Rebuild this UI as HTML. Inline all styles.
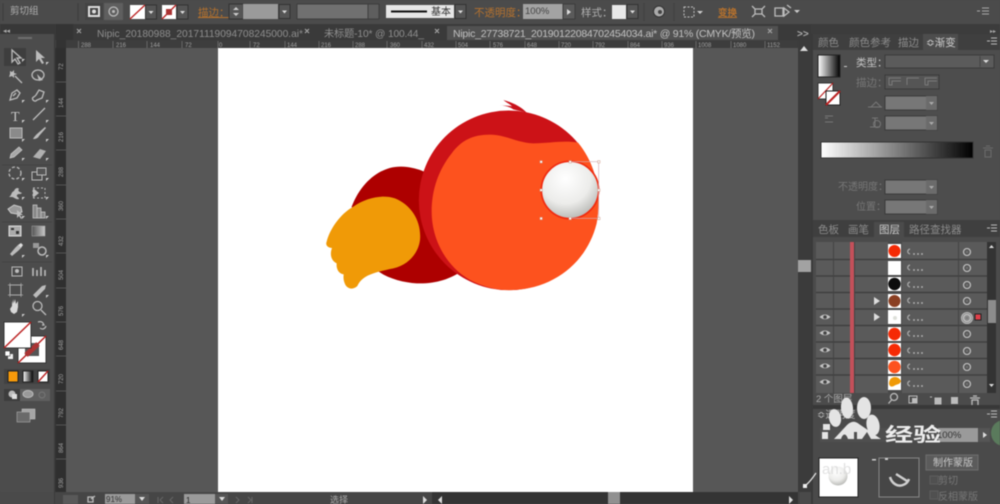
<!DOCTYPE html>
<html><head><meta charset="utf-8"><title>Illustrator</title>
<style>
html,body{margin:0;padding:0;background:#4a4a4a;width:1000px;height:504px;overflow:hidden}
svg{display:block;filter:blur(.5px)}
text{font-family:"Liberation Sans","Noto Sans CJK SC",sans-serif}
.c{font-size:11px;fill:#b0b0b0}
.o{font-size:11px;fill:#b5722e;text-decoration:underline}
.t{font-size:10.2px;fill:#8e8e8e}
.r{font-size:6px;fill:#a0a0a0}
.p{font-size:10.5px;fill:#8c8c8c}
.i{fill:none;stroke:#bcbcbc;stroke-width:1.3}
.f{fill:#bcbcbc}
</style></head><body>
<svg width="1000" height="504" viewBox="0 0 1000 504" xmlns="http://www.w3.org/2000/svg">
<defs>
<g id="dd"><rect x="0" y="0" width="11" height="14" fill="#555" stroke="#333"/><path d="M3 6h5l-2.500 3z" fill="#ddd"/></g>
<g id="tgt"><circle cx="0" cy="0" r="3.500" fill="none" stroke="#c8c8c8" stroke-width="1.100"/><circle cx="0" cy="0" r="1" fill="#777"/></g>
<g id="eye"><path d="M-5.500 0Q0 -5 5.500 0Q0 4.500 -5.500 0Z" fill="#c4c4c4"/><circle r="1.800" fill="#444"/></g>
<g id="crn"><path d="M0 0l3 0-3 3z" fill="#ccc"/></g>
<radialGradient id="eg" cx=".42" cy=".3" r=".8"><stop offset="0" stop-color="#fff"/><stop offset=".55" stop-color="#ececea"/><stop offset="1" stop-color="#a9aaa6"/></radialGradient>
<linearGradient id="gb"><stop offset="0" stop-color="#fff"/><stop offset="1" stop-color="#000"/></linearGradient>
<linearGradient id="tg"><stop offset="0" stop-color="#555"/><stop offset="1" stop-color="#c8c8c8"/></linearGradient>
</defs>

<!-- base -->
<rect width="1000" height="504" fill="#4a4a4a"/>
<rect x="66" y="48" width="732" height="444" fill="#575757"/>
<rect x="218" y="48" width="475" height="444" fill="#fff"/>

<!-- control bar -->
<rect width="1000" height="24" fill="#4b4b4b"/>
<path d="M3 3v18M78 3v18" stroke="#3d3d3d"/>
<text x="10" y="14" class="c" style="font-size:9.500px">剪切组</text>
<rect x="85" y="3" width="18" height="17" fill="#444"/><rect x="104" y="3" width="19" height="17" fill="#5f5f5f"/>
<rect x="89" y="7" width="10" height="9" fill="none" stroke="#ddd" stroke-width="2"/><circle cx="94" cy="11.500" r="2" fill="#ddd"/>
<circle cx="113.500" cy="11.500" r="4.500" class="i"/><circle cx="113.500" cy="11.500" r="1.500" class="f"/>
<rect x="130" y="5" width="15" height="14" fill="#fff"/><path d="M130 19L145 5" stroke="#b22" stroke-width="1.300"/>
<use href="#dd" x="145.500" y="5"/>
<rect x="162" y="5" width="14" height="14" fill="#fff"/><path d="M162 19L176 5" stroke="#b22" stroke-width="1.300"/><rect x="166" y="9" width="6" height="6" fill="#a33"/>
<use href="#dd" x="177" y="5"/>
<text x="198" y="16" class="o" style="font-size:10.500px">描边：</text>
<rect x="229" y="4" width="14" height="15" fill="#555" stroke="#333"/><path d="M233 10l3-3 3 3zM233 13l3 3 3-3z" fill="#ccc"/>
<rect x="243" y="4" width="35" height="15" fill="#9a9a9a"/>
<use href="#dd" x="279" y="4.500"/>
<rect x="297" y="4" width="71" height="15" fill="#707070" stroke="#3d3d3d"/><rect x="368" y="4" width="11" height="15" fill="#5e5e5e" stroke="#3d3d3d"/>
<rect x="386" y="5" width="68" height="13" fill="#e6e6e6"/><rect x="391" y="10.500" width="36" height="2" fill="#111"/>
<text x="431" y="15" style="font-size:10px" fill="#333">基本</text>
<use href="#dd" x="455" y="4.500"/>
<text x="474" y="16" class="o" style="font-size:10.500px;text-decoration:none">不透明度：</text>
<rect x="523" y="4" width="40" height="15" fill="#a3a3a3"/><text x="525" y="14" style="font-size:9.500px" fill="#444">100%</text>
<rect x="563" y="4" width="12" height="15" fill="#5a5a5a" stroke="#3d3d3d"/><path d="M567 9l4 3-4 3z" fill="#ddd"/>
<text x="581" y="16" class="c" style="font-size:10.500px">样式：</text>
<rect x="612" y="5" width="14" height="14" fill="#e8e8e8"/><use href="#dd" x="627" y="4.500"/>
<circle cx="659" cy="11.500" r="5.500" fill="#ababab" stroke="#333"/><circle cx="660" cy="12" r="2" fill="#444"/>
<path d="M644 3v18M674 3v18" stroke="#3f3f3f"/>
<rect x="684" y="7" width="10" height="10" fill="none" stroke="#c0c0c0" stroke-dasharray="2 1.500"/><path d="M697 11h6l-3 3z" fill="#ccc"/>
<text x="718" y="16" style="font-size:9.500px;font-weight:bold;text-decoration:underline" fill="#b8722c">变换</text>
<path d="M752 6l3 3h7l3-3M752 17l3-3h7l3 3M755 9v5M762 9v5" class="i"/>
<path d="M775 8h8v8h-8zM784 8l5 4-5 4zM787 5l4 3" class="i"/><path d="M794 10h6l-3 3z" fill="#ccc"/>
<path d="M977 11h3M982 8h7M982 11h7M982 14h7" stroke="#aaa"/>

<!-- tab bar -->
<rect y="24" width="811" height="16" fill="#3a3a3a"/>
<rect x="0" y="24" width="56" height="10" fill="#383838"/>
<rect x="56" y="24" width="17" height="16" fill="#343434"/>
<rect x="447" y="26" width="331" height="14" fill="#515151"/>
<path d="M77 33l4-4m-4 0l4 4M305 33l4-4m-4 0l4 4M435 33l4-4m-4 0l4 4M768 33l4-4m-4 0l4 4" stroke="#aaa" stroke-width="1.100"/>
<text x="97" y="37" class="t" textLength="206">Nipic_20180988_20171119094708245000.ai*</text>
<text x="324" y="37" class="t" textLength="100">未标题-10* @ 100.44_</text>
<text x="453" y="37" style="font-size:10.500px" fill="#c2c2c2" textLength="302">Nipic_27738721_20190122084702454034.ai* @ 91% (CMYK/预览)</text>
<text x="797" y="37" style="font-size:10px;font-weight:bold" fill="#aaa">&gt;&gt;</text>
<text x="3" y="33" style="font-size:7px" fill="#aaa">◂◂</text>

<!-- h ruler -->
<rect x="56" y="40" width="742" height="8" fill="#3d3d3d"/>
<rect x="56" y="40" width="10" height="8" fill="#333"/>
<text x="81" y="47" class="r">288</text><text x="116" y="47" class="r">216</text><text x="150" y="47" class="r">144</text><text x="185" y="47" class="r">72</text><text x="219" y="47" class="r">0</text><text x="253" y="47" class="r">72</text><text x="287" y="47" class="r">144</text><text x="321" y="47" class="r">216</text><text x="355" y="47" class="r">288</text><text x="390" y="47" class="r">360</text><text x="424" y="47" class="r">432</text><text x="458" y="47" class="r">504</text><text x="493" y="47" class="r">576</text><text x="527" y="47" class="r">648</text><text x="561" y="47" class="r">720</text><text x="595" y="47" class="r">792</text><text x="630" y="47" class="r">864</text><text x="664" y="47" class="r">936</text><text x="698" y="47" class="r">1008</text><text x="733" y="47" class="r">1080</text><text x="767" y="47" class="r">1152</text>
<path d="M78.500 41v7M113 41v7M147 41v7M182 41v7M218 41v7M250 41v7M285 41v7M319 41v7M353 41v7M387 41v7M422 41v7M456 41v7M490 41v7M525 41v7M559 41v7M593 41v7M628 41v7M662 41v7M696 41v7M731 41v7M765 41v7" stroke="#666"/>

<!-- v ruler -->
<rect x="55" y="48" width="11" height="444" fill="#2f2f2f"/>
<path d="M56 82h10M56 116h10M56 150h10M56 185h10M56 219h10M56 253h10M56 288h10M56 322h10M56 356h10M56 391h10M56 425h10M56 459h10" stroke="#555"/>
<text transform="translate(63,70) rotate(-90)" class="r">72</text><text transform="translate(63,108) rotate(-90)" class="r">144</text><text transform="translate(63,142) rotate(-90)" class="r">216</text><text transform="translate(63,177) rotate(-90)" class="r">288</text><text transform="translate(63,211) rotate(-90)" class="r">360</text><text transform="translate(63,246) rotate(-90)" class="r">432</text><text transform="translate(63,280) rotate(-90)" class="r">504</text><text transform="translate(63,316) rotate(-90)" class="r">576</text><text transform="translate(63,350) rotate(-90)" class="r">648</text><text transform="translate(63,384) rotate(-90)" class="r">720</text><text transform="translate(63,418) rotate(-90)" class="r">792</text><text transform="translate(63,453) rotate(-90)" class="r">864</text><text transform="translate(63,488) rotate(-90)" class="r">936</text>

<!-- toolbar -->
<rect x="0" y="34" width="55" height="458" fill="#4c4c4c"/>
<rect x="54" y="34" width="1.500" height="470" fill="#3a3a3a"/>
<rect x="18" y="37" width="14" height="2" fill="#6e6e6e"/>
<rect x="4" y="48" width="22" height="18" fill="#3e3e3e"/>
<path d="M12 50v12l3-3 3 5 2-1-3-5h4z" class="i"/>
<path d="M36 50v12l3-3 3 5 2-1-3-5h4z" class="f"/>
<path d="M10 71l2 1 2-2 0 3 3 1-3 1 0 3-2-2-3 1 1-3z" class="f"/><path d="M15 76l7 7" class="i" stroke-width="2"/>
<ellipse cx="38" cy="75" rx="6" ry="5" class="i" stroke-width="2"/><path d="M37 74l6 6-4 1z" class="f"/>
<path d="M10 100l2-7 5-3 3 3-3 5zM13 96l3-3" class="i" stroke-width="1.800"/>
<path d="M33 100c-2-3 2-3 3-5l3-5 5 2-2 6-5 2c-1 1-2 2-4 0z" class="i" stroke-width="1.600"/>
<text x="11" y="121" style="font-size:14px;font-family:'Liberation Serif',serif" fill="#c8c8c8">T</text>
<path d="M33 120l12-12" class="i"/>
<rect x="10" y="128" width="12" height="10" fill="#8a8a8a" stroke="#bbb"/>
<path d="M33 139c3 0 5-1 6-3l7-8-1-1-8 7c-1 1-3 3-4 5z" class="f"/>
<path d="M10 158l1-4 8-7 3 3-8 7z" fill="#a8a8a8" stroke="#ccc" stroke-width=".700"/>
<path d="M33 157l7-8 6 2-6 8z" fill="#b0b0b0"/>
<circle cx="15" cy="173" r="6" fill="none" stroke="#bbb" stroke-width="1.300" stroke-dasharray="3 2"/>
<rect x="32" y="172" width="10" height="8" fill="none" stroke="#bbb"/><rect x="37" y="168" width="9" height="7" fill="#555" stroke="#bbb"/>
<path d="M9 197c3-2 2-5 5-6 1-3 4-4 5-2-2 2 1 3 3 4-2 2-3 0-5 2-1 2 2 2 2 4-3 1-5-2-7-2z" class="f"/>
<path d="M33 188h12v10h-12z" fill="none" stroke="#bbb" stroke-dasharray="2 2"/><path d="M33 188l6 5-6 5z" class="f"/>
<path d="M8 209l6-4 7 2 1 5-5 2-6-1z" fill="#999" stroke="#ccc"/><path d="M17 210v8l2-2 2 3 1-1-2-3h3z" class="f"/>
<path d="M33 205h4v13h-4zM37 208h4v10h-4zM41 212h4v6h-4z" fill="#888" stroke="#ccc" stroke-width=".700"/>
<rect x="9" y="226" width="12" height="10" fill="#aaa" stroke="#ddd"/><path d="M11 228h3v2h-3zM16 231h3v3h-3z" fill="#333"/>
<rect x="32" y="226" width="13" height="10" fill="url(#tg)" stroke="#aaa" stroke-width=".500"/>
<path d="M10 254l5-6 3-3 3 3-3 3-6 5z" fill="#bbb"/><path d="M18 245l3-2 2 2-2 3z" fill="#ddd"/>
<rect x="33" y="243" width="6" height="5" fill="#999"/><circle cx="42" cy="251" r="4" fill="none" stroke="#bbb" stroke-width="1.500"/>
<rect x="12" y="267" width="10" height="9" fill="none" stroke="#bbb"/><circle cx="17" cy="271" r="2" class="f"/>
<path d="M33 268v8M37 270v6M41 267v9M45 270v6" stroke="#bbb" stroke-width="1.600"/>
<rect x="10" y="285" width="11" height="10" fill="none" stroke="#bbb"/><path d="M10 283v14M21 283v14M8 285h15M8 295h15" stroke="#aaa" stroke-width=".700"/>
<path d="M33 295l9-9 4-1-1 4-9 9z" class="f"/>
<path d="M10 309l2-3v-5l1 3v-5l1 4 1-4 1 5 2-3v6l-1 5-3 2-3-2z" fill="#d8d8d8"/>
<circle cx="37.500" cy="306" r="4.500" class="i" stroke-width="1.600"/><path d="M41 310l5 5" class="i" stroke-width="2"/>
<use href="#crn" x="22" y="59"/><use href="#crn" x="46" y="62"/><use href="#crn" x="22" y="100"/><use href="#crn" x="46" y="100"/><use href="#crn" x="22" y="120"/><use href="#crn" x="46" y="120"/><use href="#crn" x="22" y="139"/><use href="#crn" x="46" y="139"/><use href="#crn" x="22" y="158"/><use href="#crn" x="46" y="158"/><use href="#crn" x="22" y="178"/><use href="#crn" x="46" y="178"/><use href="#crn" x="22" y="197"/><use href="#crn" x="46" y="197"/><use href="#crn" x="22" y="216"/><use href="#crn" x="46" y="216"/><use href="#crn" x="22" y="255"/><use href="#crn" x="46" y="255"/><use href="#crn" x="46" y="295"/><use href="#crn" x="22" y="314"/>
<path d="M2 165h50M2 222h50M2 262h50" stroke="#444"/>

<!-- fill/stroke -->
<rect x="18" y="336" width="28" height="27" fill="#fff" stroke="#333"/>
<rect x="25" y="343" width="14" height="13" fill="#555"/>
<path d="M18 363L46 336" stroke="#b22" stroke-width="1.500"/>
<path d="M26 355L38 344" stroke="#a33" stroke-width="5"/>
<rect x="4" y="322" width="27" height="26" fill="#fff" stroke="#333"/>
<path d="M4 348L31 322" stroke="#b22" stroke-width="1.500"/>
<path d="M38 322c3-1 5 0 6 3l-2 0M46 326c-1 3-4 4-6 2" fill="none" stroke="#bbb" stroke-width="1.200"/>
<rect x="8" y="354" width="5" height="5" fill="#eee"/><rect x="5" y="351" width="5" height="5" fill="#fff" stroke="#222" stroke-width=".500"/>
<rect x="4" y="369" width="46" height="15" fill="#424242"/>
<rect x="8" y="371" width="10" height="11" fill="#f79a0a" stroke="#222"/>
<rect x="23" y="371" width="10" height="11" fill="url(#gb)" stroke="#222"/>
<rect x="38" y="371" width="10" height="11" fill="#fff" stroke="#222"/><path d="M38 382l10-11" stroke="#b22" stroke-width="1.400"/>
<rect x="4" y="389" width="46" height="12" fill="#5f5f5f"/><rect x="4" y="389" width="16" height="12" fill="#3d3d3d"/>
<circle cx="12" cy="394" r="3.500" fill="#bbb"/><rect x="12" y="394" width="5" height="5" fill="#ddd"/>
<ellipse cx="28" cy="394" rx="5" ry="3.500" fill="#999" stroke="#bbb"/><circle cx="42" cy="395" r="3" fill="none" stroke="#777"/>
<rect x="22" y="409" width="13" height="10" fill="#a5a5a5" stroke="#ccc" stroke-width=".500"/><rect x="17" y="412" width="13" height="10" fill="#6a6a6a" stroke="#bbb" stroke-width=".500"/>

<!-- v scrollbar -->
<rect x="798" y="40" width="13" height="452" fill="#3b3b3b"/>
<path d="M800 51l4-5 4 5z" fill="#ddd"/>
<rect x="798" y="260" width="13" height="12" fill="#a2a2a2"/>
<rect x="811" y="24" width="189" height="480" fill="#4a4a4a"/>
<rect x="811" y="24" width="189" height="10" fill="#3c3c3c"/>
<text x="990" y="33" style="font-size:6px" fill="#aaa">▸▸</text>

<!-- bottom status -->
<rect x="55" y="492" width="745" height="12" fill="#464646"/>
<rect x="63" y="495" width="15" height="9" fill="#595959"/>
<path d="M88 497h5v5h-5zM91 499l4-3" class="i" stroke-width="1"/>
<rect x="105" y="494" width="30" height="10" fill="#9a9a9a"/><text x="106" y="502" style="font-size:8px" fill="#333">91%</text>
<rect x="135" y="494" width="14" height="10" fill="#555"/><path d="M139 497h6l-3 4z" fill="#ddd"/>
<path d="M158 497v6M163 497l-3 3 3 3M173 497l-3 3 3 3" stroke="#666" fill="none"/>
<rect x="184" y="494" width="31" height="10" fill="#9a9a9a"/><text x="186" y="503" style="font-size:8px" fill="#222">1</text>
<rect x="215" y="494" width="13" height="10" fill="#555"/><path d="M219 497h6l-3 4z" fill="#ddd"/>
<path d="M236 497l3 3-3 3M248 497l3 3-3 3M252 497v6" stroke="#666" fill="none"/>
<text x="330" y="503" style="font-size:9px" fill="#aaa">选择</text>
<path d="M423 496l4 4-4 4z" fill="#ddd"/>
<rect x="432" y="492" width="366" height="12" fill="#343434"/>
<path d="M442 496l-4 4 4 4z" fill="#ddd"/>
<rect x="608" y="492" width="12" height="12" fill="#909090"/>
<path d="M789 496l4 4-4 4z" fill="#ddd"/>

<!-- ARTWORK -->
<g transform="translate(310 90) scale(.33333)">
<path d="M125 350C155 272 215 228 275 230C320 232 350 245 380 270L462 538C420 570 370 582 320 580C280 578 230 565 200 540Z" fill="#ad0000"/>
<path d="M565 45C582 46 598 50 610 58L650 68C635 52 610 38 580 30C590 38 600 43 606 49C592 47 578 46 565 45Z" fill="#c8111a"/>
<circle cx="596" cy="331" r="269.500" fill="#cc1217"/>
<path d="M804 158C760 150 720 160 670 160C620 158 590 135 540 134C490 134 455 150 425 190C385 240 365 300 365 365C365 450 410 530 480 570C530 595 570 602 610 600C730 595 830 520 860 400C875 320 860 225 804 158Z" fill="#fd521e"/>
<path d="M50 455C58 420 90 372 130 350C165 325 215 312 255 325C305 345 335 395 330 450C325 490 295 525 250 535C225 540 205 545 190 550C165 558 150 570 142 588C130 600 112 598 105 582C100 570 100 562 101 553C87 552 78 537 80 520C65 513 58 495 66 474C55 474 45 466 50 455Z" fill="#f09a07"/>
<circle cx="780" cy="300" r="86" fill="url(#eg)" stroke="#f02b10" stroke-width="5"/>
<path d="M780 215H866V385H780" fill="none" stroke="#d4aeb6" stroke-width="2"/>
<g fill="#fff" stroke="#c98" stroke-width="1.500">
<rect x="690" y="212" width="7" height="7"/><rect x="777" y="212" width="7" height="7"/><rect x="863" y="212" width="7" height="7"/>
<rect x="690" y="297" width="7" height="7"/><rect x="863" y="297" width="7" height="7"/>
<rect x="690" y="382" width="7" height="7"/><rect x="777" y="382" width="7" height="7"/><rect x="863" y="382" width="7" height="7"/>
</g>
</g>

<!-- gradient panel -->
<rect x="811" y="34" width="189" height="186" fill="#4d4d4d"/>
<rect x="811" y="34" width="189" height="16" fill="#3f3f3f"/>
<rect x="923" y="34" width="35" height="16" fill="#4d4d4d"/>
<text x="818" y="46" class="p">颜色</text><text x="849" y="46" class="p">颜色参考</text><text x="898" y="46" class="p">描边</text>
<text x="926" y="46" style="font-size:10.500px" fill="#cfcfcf">≎渐变</text>
<path d="M987 41h3M991 38h6M991 41h6M991 44h6" stroke="#bbb"/>
<rect x="818" y="55" width="22" height="22" fill="url(#gb)" stroke="#222"/>
<path d="M844 66h3v1h-3z" fill="#ccc"/>
<text x="856" y="66" style="font-size:10.500px" fill="#c4c4c4">类型：</text>
<rect x="885" y="55" width="109" height="13" fill="#5b5b5b" stroke="#3a3a3a"/>
<path d="M983 60h6l-3 3z" fill="#ddd"/><path d="M980 56v11" stroke="#444"/>
<rect x="818" y="83" width="15" height="16" fill="#fff" stroke="#333"/><path d="M818 99l15-16" stroke="#b22" stroke-width="1.200"/>
<rect x="826" y="91" width="14" height="14" fill="#fff" stroke="#222"/><path d="M826 105l14-14" stroke="#b22" stroke-width="2"/>
<text x="856" y="86" class="p" style="fill:#777">描边：</text>
<rect x="885" y="75" width="54" height="14" fill="#555" stroke="#3a3a3a"/>
<path d="M889 85v-7h12M889 85h3v-4h9M907 85v-7h12M925 85v-7h12M925 85h3v-4h9" fill="none" stroke="#7a7a7a"/>
<path d="M871 107l5-5 5 5zM868 107h14" fill="none" stroke="#777"/>
<rect x="885" y="96" width="52" height="14" fill="#777" stroke="#3a3a3a"/><rect x="926" y="96" width="11" height="14" fill="#6b6b6b"/><path d="M929 102h5l-2.500 3z" fill="#aaa"/>
<rect x="885" y="116" width="52" height="14" fill="#777" stroke="#3a3a3a"/><rect x="926" y="116" width="11" height="14" fill="#6b6b6b"/><path d="M929 122h5l-2.500 3z" fill="#aaa"/>
<path d="M872 118h6M875 118v9M870 127h10" fill="none" stroke="#777"/><circle cx="877" cy="124" r="3.500" fill="none" stroke="#777"/>
<path d="M825 116h8M825 122h8M825 118h3M830 122h3" stroke="#777"/>
<rect x="821" y="142" width="152" height="16" fill="url(#gb)" stroke="#333"/>
<path d="M983 148h10M985 150h6v7h-6zM986 146h4" fill="none" stroke="#6c6c6c"/>
<text x="838" y="190" class="p" style="fill:#777;font-size:10px">不透明度：</text>
<rect x="885" y="180" width="52" height="14" fill="#777" stroke="#3a3a3a"/><rect x="926" y="180" width="11" height="14" fill="#6b6b6b"/><path d="M929 186h5l-2.500 3z" fill="#aaa"/>
<text x="856" y="210" class="p" style="fill:#777;font-size:10px">位置：</text>
<rect x="885" y="200" width="52" height="14" fill="#777" stroke="#3a3a3a"/><rect x="926" y="200" width="11" height="14" fill="#6b6b6b"/><path d="M929 206h5l-2.500 3z" fill="#aaa"/>
<rect x="811" y="34" width="2" height="470" fill="#3a3a3a"/>

<!-- layers panel -->
<rect x="813" y="220" width="187" height="185" fill="#4b4b4b"/>
<rect x="813" y="220" width="187" height="17" fill="#3f3f3f"/>
<rect x="874" y="222" width="30" height="15" fill="#4b4b4b"/>
<text x="818" y="233" class="p">色板</text><text x="848" y="233" class="p">画笔</text><text x="879" y="233" style="font-size:10.500px" fill="#cfcfcf">图层</text><text x="909" y="233" class="p">路径查找器</text>
<path d="M987 228h3M991 225h6M991 228h6M991 231h6" stroke="#bbb"/>
<rect x="816" y="242" width="171" height="151" fill="#5a5a5a"/>
<path d="M816 259.500h171M816 276h171M816 292.500h171M816 309h171M816 325.500h171M816 342h171M816 358.500h171M816 375h171" stroke="#3c3c3c" stroke-width="1.200"/>
<path d="M833.500 242v151M854.500 242v151M958.500 242v151" stroke="#434343"/>
<rect x="850" y="242" width="4" height="151" fill="#c4505a"/>
<rect x="888" y="242" width="14" height="151" fill="#4a4a4a"/>
<rect x="888" y="244" width="13" height="14" fill="#fff"/><circle cx="894.500" cy="251" r="6" fill="#f52a05"/>
<rect x="888" y="261" width="13" height="14" fill="#fff"/>
<rect x="888" y="277" width="13" height="14" fill="#fff"/><circle cx="894.500" cy="284" r="6.200" fill="#0c0c0c"/>
<rect x="888" y="294" width="13" height="14" fill="#fff"/><circle cx="894.500" cy="301" r="6" fill="#8a3f22"/>
<rect x="888" y="310" width="13" height="14" fill="#fff"/><circle cx="895" cy="318" r="2" fill="#dde0da"/>
<rect x="888" y="327" width="13" height="14" fill="#fff"/><circle cx="894.500" cy="334" r="6.200" fill="#f52a05"/>
<rect x="888" y="343" width="13" height="14" fill="#fff"/><circle cx="894.500" cy="350" r="6.200" fill="#f52a05"/>
<rect x="888" y="360" width="13" height="14" fill="#fff"/><circle cx="894.500" cy="367" r="6.200" fill="#fd521e"/>
<rect x="888" y="376" width="13" height="14" fill="#fff"/><path d="M889 384c0-5 3-7 6-7s5 2 6 4c-1 4-5 3-7 5-2 1-4 1-5-2z" fill="#f09a07"/>
<path d="M874 297l6 4-6 4zM874 313l6 4-6 4z" fill="#ddd"/>
<g fill="none" stroke="#aaa" stroke-width="1.200">
<path d="M910 254c-3-1-3-4 0-5"/><path d="M910 270c-3-1-3-4 0-5"/><path d="M910 287c-3-1-3-4 0-5"/><path d="M910 303c-3-1-3-4 0-5"/><path d="M910 320c-3-1-3-4 0-5"/><path d="M910 336c-3-1-3-4 0-5"/><path d="M910 353c-3-1-3-4 0-5"/><path d="M910 369c-3-1-3-4 0-5"/><path d="M910 386c-3-1-3-4 0-5"/>
</g>
<g fill="#bbb">
<circle cx="914" cy="254" r=".9"/><circle cx="918" cy="254" r=".9"/><circle cx="922" cy="254" r=".9"/>
<circle cx="914" cy="270" r=".9"/><circle cx="918" cy="270" r=".9"/><circle cx="922" cy="270" r=".9"/>
<circle cx="914" cy="287" r=".9"/><circle cx="918" cy="287" r=".9"/><circle cx="922" cy="287" r=".9"/>
<circle cx="914" cy="303" r=".9"/><circle cx="918" cy="303" r=".9"/><circle cx="922" cy="303" r=".9"/>
<circle cx="914" cy="320" r=".9"/><circle cx="918" cy="320" r=".9"/><circle cx="922" cy="320" r=".9"/>
<circle cx="914" cy="336" r=".9"/><circle cx="918" cy="336" r=".9"/><circle cx="922" cy="336" r=".9"/>
<circle cx="914" cy="353" r=".9"/><circle cx="918" cy="353" r=".9"/><circle cx="922" cy="353" r=".9"/>
<circle cx="914" cy="369" r=".9"/><circle cx="918" cy="369" r=".9"/><circle cx="922" cy="369" r=".9"/>
<circle cx="914" cy="386" r=".9"/><circle cx="918" cy="386" r=".9"/><circle cx="922" cy="386" r=".9"/>
</g>
<use href="#tgt" x="967" y="252"/><use href="#tgt" x="967" y="268"/><use href="#tgt" x="967" y="285"/><use href="#tgt" x="967" y="301"/>
<circle cx="967" cy="318" r="5.500" fill="#8c8c8c" stroke="#bbb"/><use href="#tgt" x="967" y="318"/>
<use href="#tgt" x="967" y="334"/><use href="#tgt" x="967" y="351"/><use href="#tgt" x="967" y="367"/><use href="#tgt" x="967" y="384"/>
<rect x="975" y="314" width="6" height="6" fill="#e0404a" stroke="#222"/>
<use href="#eye" x="825" y="317"/><use href="#eye" x="825" y="333"/><use href="#eye" x="825" y="350"/><use href="#eye" x="825" y="366"/><use href="#eye" x="825" y="382"/>
<rect x="987" y="242" width="9" height="151" fill="#333"/>
<path d="M989 248l2.500-3 2.500 3zM989 384l2.500 3 2.500-3z" fill="#ddd"/>
<rect x="988" y="300" width="8" height="23" fill="#8c8c8c"/>
<text x="816" y="402" style="font-size:9.500px" fill="#aaa">2 个图层</text>
<circle cx="894" cy="397" r="3.500" class="i"/><path d="M891.500 400l-3 3.500" class="i" stroke-width="1.500"/>
<rect x="909" y="396" width="8" height="7" fill="none" stroke="#bbb"/><rect x="912" y="398" width="5" height="5" class="f"/>
<path d="M930 397h2M935 398h6v6h-6z" fill="#bbb" stroke="#bbb"/>
<path d="M951 397h7v7h-7z" class="f"/>
<path d="M970 398h10M972 400h6v6h-6zM973 396h4" class="i"/>

<!-- transparency panel -->
<rect x="813" y="405" width="187" height="99" fill="#4a4a4a"/>
<rect x="813" y="405" width="187" height="4" fill="#383838"/>
<text x="817" y="418" style="font-size:10px" fill="#bbb">≎透明度</text>
<path d="M987 414h3M991 411h6M991 414h6M991 417h6" stroke="#bbb"/>
<rect x="820" y="428" width="160" height="14" fill="#4f4f4f"/>
<rect x="938" y="428" width="40" height="14" fill="#9a9a9a"/><text x="937" y="438" style="font-size:9.500px" fill="#333">100%</text>
<rect x="979" y="428" width="11" height="14" fill="#555"/><path d="M983 432l4 3-4 3z" fill="#ddd"/>
<circle cx="1004" cy="433" r="13" fill="#5a7a5c"/>
<rect x="819" y="458" width="39" height="39" fill="#fff" stroke="#222"/>
<circle cx="838" cy="476" r="9.500" fill="url(#eg)"/>
<rect x="879" y="458" width="40" height="39" fill="#464646" stroke="#888"/>
<path d="M890 477c2 7 8 10 13 8 3-1 5-3 6-6M896 474l11 7" fill="none" stroke="#cfcfcf" stroke-width="2.500"/>
<rect x="926" y="455" width="52" height="15" fill="#5b5b5b" stroke="#6e6e6e"/>
<text x="933" y="466" style="font-size:10px" fill="#c8c8c8">制作蒙版</text>
<rect x="930" y="476" width="8" height="8" fill="#505050" stroke="#5d5d5d"/><text x="938" y="484" style="font-size:10px" fill="#777">剪切</text>
<rect x="930" y="491" width="8" height="8" fill="#505050" stroke="#5d5d5d"/><text x="938" y="500" style="font-size:10px" fill="#777">反相蒙版</text>
<rect x="872" y="459" width="4" height="1.500" fill="#ccc"/><rect x="885" y="458" width="3" height="2" fill="#ccc"/>

<!-- watermark -->
<g fill="#e4e4e4">
<ellipse cx="847" cy="408" rx="6" ry="10.500" transform="rotate(-5 847 408)"/>
<ellipse cx="864" cy="408" rx="7" ry="11"/>
<ellipse cx="835" cy="418" rx="6" ry="9" transform="rotate(-10 835 418)"/>
<ellipse cx="873" cy="425" rx="6.500" ry="10.500" transform="rotate(-10 873 425)"/>
<path d="M834 439L847 425Q853 419 859 424L881 439H871L867 432L862 439H857V432H854V439H848C846 433 843 433 841 439Z"/>
<rect x="823" y="424" width="7" height="6"/><rect x="822" y="432" width="6" height="7"/>
</g>
<text transform="translate(885 441) scale(1.480 1)" style="font-size:19px;font-weight:bold" fill="#ededed">经验</text>
<text x="822" y="474" style="font-size:15px" fill="#d8d8d8" opacity=".75">an.b</text>
<path d="M803 487c4-2 9-8 13-14" fill="none" stroke="#e0e0e0" stroke-width="1.300"/><rect x="803" y="484" width="4" height="4" fill="#eee"/>
</svg>
</body></html>
